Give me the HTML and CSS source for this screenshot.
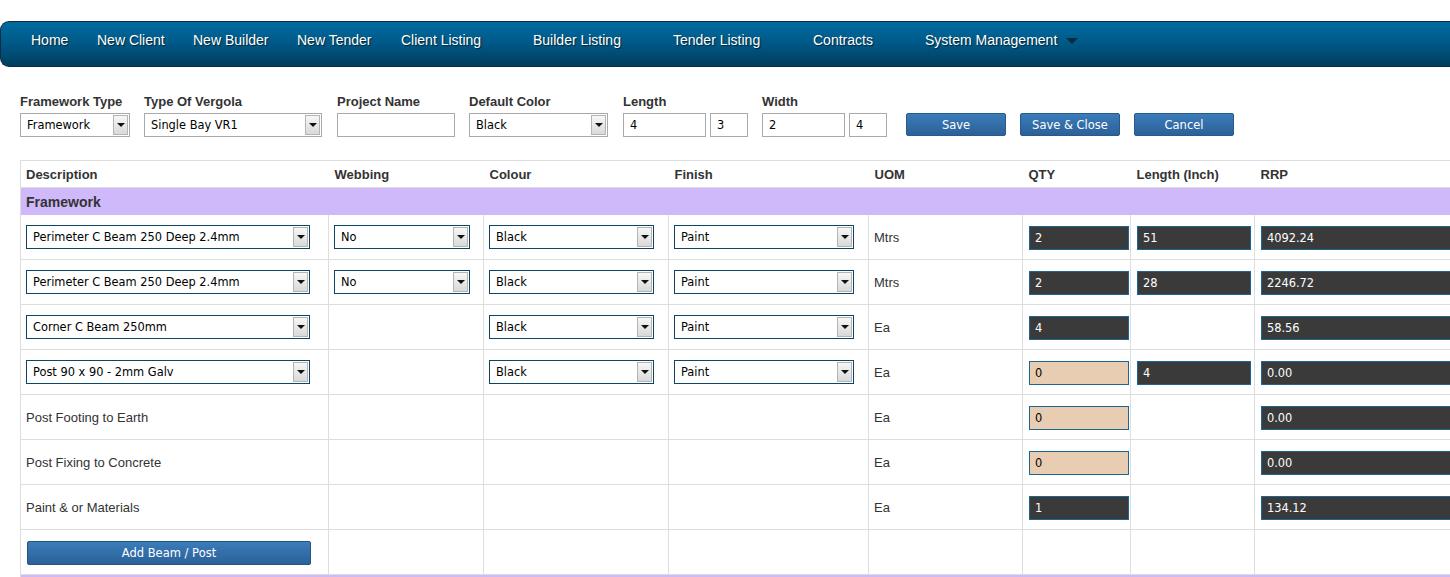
FILE: index.html
```html
<!DOCTYPE html>
<html>
<head>
<meta charset="utf-8">
<title>Quote</title>
<link rel="stylesheet" href="styles.css">
</head>
<body>
<div class="page">
  <nav class="topnav">
    <ul class="menu">
      <li class="m-home">Home</li>
      <li class="m-nc">New Client</li>
      <li class="m-nb">New Builder</li>
      <li class="m-nt">New Tender</li>
      <li class="m-cl">Client Listing</li>
      <li class="m-bl">Builder Listing</li>
      <li class="m-tl">Tender Listing</li>
      <li class="m-co">Contracts</li>
      <li class="m-sm">System Management <span class="caret"></span></li>
    </ul>
  </nav>

  <div class="toolbar">
    <div class="field w-ftype">
      <div class="lbl">Framework Type</div>
      <div class="sel grey"><span class="val">Framework</span><span class="arrow"></span></div>
    </div>
    <div class="field w-vtype">
      <div class="lbl">Type Of Vergola</div>
      <div class="sel grey"><span class="val">Single Bay VR1</span><span class="arrow"></span></div>
    </div>
    <div class="field w-pname plus1">
      <div class="lbl up1">Project Name</div>
      <div class="txt"></div>
    </div>
    <div class="field w-color">
      <div class="lbl">Default Color</div>
      <div class="sel grey"><span class="val">Black</span><span class="arrow"></span></div>
    </div>
    <div class="field plus1">
      <div class="lbl up1">Length</div>
      <div class="pair"><div class="txt big">4</div><div class="txt small">3</div></div>
    </div>
    <div class="field">
      <div class="lbl up1">Width</div>
      <div class="pair"><div class="txt big">2</div><div class="txt small">4</div></div>
    </div>
    <div class="buttons">
      <button class="btn">Save</button>
      <button class="btn">Save &amp; Close</button>
      <button class="btn">Cancel</button>
    </div>
  </div>

  <table class="grid">
    <colgroup>
      <col class="c-desc"><col class="c-web"><col class="c-col"><col class="c-fin"><col class="c-uom"><col class="c-qty"><col class="c-len"><col class="c-rrp">
    </colgroup>
    <thead>
      <tr class="head">
        <th>Description</th><th>Webbing</th><th>Colour</th><th>Finish</th><th>UOM</th><th>QTY</th><th>Length (Inch)</th><th>RRP</th>
      </tr>
    </thead>
    <tbody>
      <tr class="section"><td colspan="8">Framework</td></tr>
      <tr>
        <td><div class="sel dark s-desc"><span class="val">Perimeter C Beam 250 Deep 2.4mm</span><span class="arrow"></span></div></td>
        <td><div class="sel dark s-web"><span class="val">No</span><span class="arrow"></span></div></td>
        <td><div class="sel dark s-col"><span class="val">Black</span><span class="arrow"></span></div></td>
        <td><div class="sel dark s-fin"><span class="val">Paint</span><span class="arrow"></span></div></td>
        <td>Mtrs</td>
        <td class="in"><div class="num q">2</div></td>
        <td class="in"><div class="num l">51</div></td>
        <td class="in"><div class="num r">4092.24</div></td>
      </tr>
      <tr>
        <td><div class="sel dark s-desc"><span class="val">Perimeter C Beam 250 Deep 2.4mm</span><span class="arrow"></span></div></td>
        <td><div class="sel dark s-web"><span class="val">No</span><span class="arrow"></span></div></td>
        <td><div class="sel dark s-col"><span class="val">Black</span><span class="arrow"></span></div></td>
        <td><div class="sel dark s-fin"><span class="val">Paint</span><span class="arrow"></span></div></td>
        <td>Mtrs</td>
        <td class="in"><div class="num q">2</div></td>
        <td class="in"><div class="num l">28</div></td>
        <td class="in"><div class="num r">2246.72</div></td>
      </tr>
      <tr>
        <td><div class="sel dark s-desc"><span class="val">Corner C Beam 250mm</span><span class="arrow"></span></div></td>
        <td></td>
        <td><div class="sel dark s-col"><span class="val">Black</span><span class="arrow"></span></div></td>
        <td><div class="sel dark s-fin"><span class="val">Paint</span><span class="arrow"></span></div></td>
        <td>Ea</td>
        <td class="in"><div class="num q">4</div></td>
        <td class="in"></td>
        <td class="in"><div class="num r">58.56</div></td>
      </tr>
      <tr>
        <td><div class="sel dark s-desc"><span class="val">Post 90 x 90 - 2mm Galv</span><span class="arrow"></span></div></td>
        <td></td>
        <td><div class="sel dark s-col"><span class="val">Black</span><span class="arrow"></span></div></td>
        <td><div class="sel dark s-fin"><span class="val">Paint</span><span class="arrow"></span></div></td>
        <td>Ea</td>
        <td class="in"><div class="num q tan">0</div></td>
        <td class="in"><div class="num l">4</div></td>
        <td class="in"><div class="num r">0.00</div></td>
      </tr>
      <tr>
        <td>Post Footing to Earth</td>
        <td></td><td></td><td></td>
        <td>Ea</td>
        <td class="in"><div class="num q tan">0</div></td>
        <td class="in"></td>
        <td class="in"><div class="num r">0.00</div></td>
      </tr>
      <tr>
        <td>Post Fixing to Concrete</td>
        <td></td><td></td><td></td>
        <td>Ea</td>
        <td class="in"><div class="num q tan">0</div></td>
        <td class="in"></td>
        <td class="in"><div class="num r">0.00</div></td>
      </tr>
      <tr>
        <td>Paint &amp; or Materials</td>
        <td></td><td></td><td></td>
        <td>Ea</td>
        <td class="in"><div class="num q">1</div></td>
        <td class="in"></td>
        <td class="in"><div class="num r">134.12</div></td>
      </tr>
      <tr>
        <td><button class="btn add">Add Beam / Post</button></td>
        <td></td><td></td><td></td><td></td><td class="in"></td><td class="in"></td><td class="in"></td>
      </tr>
      <tr class="section"><td colspan="8">&nbsp;</td></tr>
    </tbody>
  </table>
</div>
</body>
</html>
```

FILE: styles.css
```css
html, body {
  margin: 0;
  padding: 0;
  background: #fff;
  overflow: hidden;
}

.page {
  padding-top: 21px;
  width: 1490px;
  font-family: "Liberation Sans", Arial, sans-serif;
  color: #333;
}

/* ---------- top navigation ---------- */
.topnav {
  height: 44px;
  border: 1px solid #0b2c42;
  border-right: none;
  border-radius: 9px 0 0 9px;
  background: linear-gradient(#006b9f 0%, #005a89 45%, #003e5f 100%);
}

.menu {
  list-style: none;
  margin: 0;
  padding: 0 0 0 30px;
  display: flex;
  align-items: center;
  height: 100%;
}

.menu li {
  color: #fff;
  font-size: 14px;
  text-shadow: 1px 1px 1px rgba(0, 0, 0, 0.6);
  white-space: nowrap;
  display: flex;
  align-items: center;
  margin-top: -8px;
}

.m-home { width: 66px; }
.m-nc { width: 96px; }
.m-nb { width: 104px; }
.m-nt { width: 104px; }
.m-cl { width: 132px; }
.m-bl { width: 140px; }
.m-tl { width: 140px; }
.m-co { width: 112px; }

.caret {
  display: inline-block;
  width: 0;
  height: 0;
  margin-left: 9px;
  margin-top: 1px;
  border-left: 6px solid transparent;
  border-right: 6px solid transparent;
  border-top: 6px solid #0a2b40;
}

/* ---------- toolbar ---------- */
.toolbar {
  display: flex;
  align-items: flex-end;
  gap: 14px;
  padding-left: 20px;
  margin-top: 27px;
}

.field {
  display: flex;
  flex-direction: column;
}

.field.plus1 { margin-left: 1px; }

.lbl {
  font-weight: bold;
  font-size: 13px;
  line-height: 16px;
  margin-bottom: 3px;
  color: #333;
  white-space: nowrap;
}

.lbl.up1 { margin-bottom: 4px; line-height: 15px; }

.w-ftype { width: 110px; }
.w-vtype { width: 178px; }
.w-pname { width: 118px; }
.w-color { width: 139px; }

.sel {
  display: flex;
  align-items: stretch;
  box-sizing: border-box;
  height: 24px;
  background: #fff;
  font-family: "DejaVu Sans", Tahoma, sans-serif;
  font-size: 11.4px;
  color: #000;
}

.sel.grey { border: 1px solid #a9a9a9; }
.sel.dark { border: 1px solid #0f4562; height: 24px; }

.sel .val {
  flex: 1;
  padding-left: 6px;
  display: flex;
  align-items: center;
  white-space: nowrap;
  overflow: hidden;
}

.sel .arrow {
  width: 15px;
  margin: 1px;
  box-sizing: border-box;
  border: 1px solid #b4b4b4;
  background: linear-gradient(#f7f7f7, #d9d9d9);
  display: flex;
  align-items: center;
  justify-content: center;
}

.sel .arrow::after {
  content: "";
  width: 0;
  height: 0;
  border-left: 4px solid transparent;
  border-right: 4px solid transparent;
  border-top: 4px solid #111;
}

.txt {
  box-sizing: border-box;
  height: 24px;
  border: 1px solid #a9a9a9;
  background: #fff;
  font-family: "DejaVu Sans", Tahoma, sans-serif;
  font-size: 11.4px;
  color: #000;
  padding-left: 6px;
  display: flex;
  align-items: center;
}

.pair {
  display: flex;
  gap: 4px;
}

.txt.big { width: 83px; }
.txt.small { width: 38px; }

.buttons {
  display: flex;
  gap: 14px;
  margin-left: 5px;
  margin-bottom: 1px;
}

.btn {
  box-sizing: border-box;
  width: 100px;
  height: 23px;
  padding: 0;
  border: 1px solid #275a88;
  border-radius: 2px;
  background: linear-gradient(#3b7cba, #2b6198);
  color: #fff;
  font-family: "DejaVu Sans", Tahoma, sans-serif;
  font-size: 11.5px;
  cursor: pointer;
}

/* ---------- grid ---------- */
.grid {
  margin-left: 20px;
  margin-top: 23px;
  border-collapse: collapse;
  table-layout: fixed;
  width: 1470px;
  font-size: 13px;
  color: #333;
}

.c-desc { width: 308px; }
.c-web { width: 155px; }
.c-col { width: 185px; }
.c-fin { width: 200px; }
.c-uom { width: 154px; }
.c-qty { width: 108px; }
.c-len { width: 124px; }
.c-rrp { width: 236px; }

.grid th {
  text-align: left;
  font-weight: bold;
  font-size: 13px;
  height: 26px;
  padding: 0 0 0 6px;
  border-top: 1px solid #ddd;
  border-bottom: 1px solid #ddd;
  color: #333;
}

.grid th:first-child {
  border-left: 1px solid #ddd;
  padding-left: 5px;
}

.grid td {
  height: 44px;
  padding: 0 0 0 5px;
  border: 1px solid #ddd;
  border-top: none;
  vertical-align: middle;
  white-space: nowrap;
}

.grid td.in { padding-left: 6px; }

.grid tr.section td {
  height: 27px;
  background: #d0b9fb;
  border: none;
  border-left: 1px solid #ddd;
  font-weight: bold;
  font-size: 14px;
  color: #333;
}

.s-desc { width: 284px; }
.s-web { width: 136px; }
.s-col { width: 165px; }
.s-fin { width: 180px; }

.num {
  box-sizing: border-box;
  height: 24px;
  border: 1px solid #1a6796;
  background: #3a3a3a;
  color: #fff;
  font-family: "DejaVu Sans", Tahoma, sans-serif;
  font-size: 11.4px;
  padding-left: 5px;
  display: flex;
  align-items: center;
  margin-top: 1px;
}

.num.tan {
  background: #e8cdb2;
  color: #000;
}

.num.q { width: 100px; }
.num.l { width: 114px; }
.num.r { width: 240px; }

.btn.add {
  width: 284px;
  height: 24px;
  margin-left: 1px;
  margin-top: 1px;
  border-color: #24557f;
}
```
